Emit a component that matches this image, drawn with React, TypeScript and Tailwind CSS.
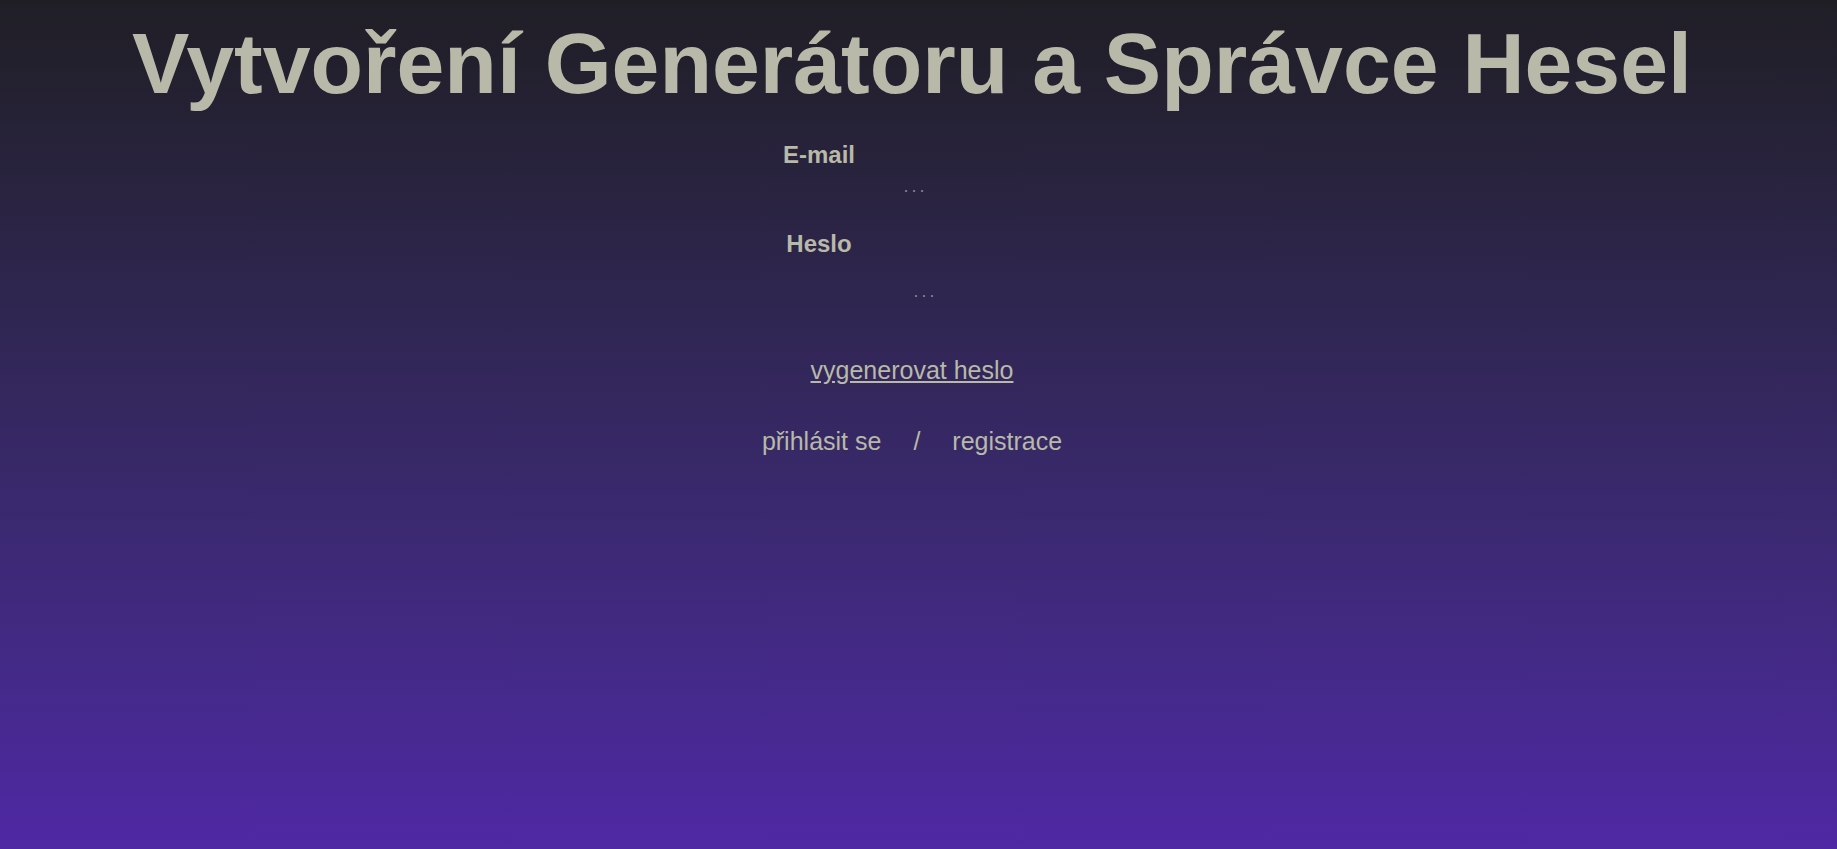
import React from 'react';

export default function App() {
  return (
    <div
      className="min-h-[849px] w-full bg-gradient-to-b from-[#201e25] to-[#4f28a4] pr-[13px] text-[#b8b9a8]"
      style={{ fontFamily: '"Liberation Sans", Arial, sans-serif' }}
    >
      {/* Title */}
      <h1 className="pt-[14px] text-center text-[86px] font-bold leading-[1.15] whitespace-nowrap">
        Vytvoření Generátoru a Správce Hesel
      </h1>

      {/* Login form */}
      <form className="mx-auto mt-[28px] w-[400px]" onSubmit={(e) => e.preventDefault()}>
        <label htmlFor="email" className="block w-[214px] text-center text-[24px] font-bold leading-[1.15]">
          E-mail
        </label>
        <input
          id="email"
          type="email"
          placeholder="..."
          className="mt-[13px] block w-full bg-transparent pl-[190px] font-['Liberation_Mono',monospace] text-[13.33px] leading-[1.133] outline-none placeholder:text-[#92909c]"
        />

        <label htmlFor="heslo" className="mt-[33px] block w-[214px] text-center text-[24px] font-bold leading-[1.15]">
          Heslo
        </label>
        <input
          id="heslo"
          type="password"
          placeholder="..."
          className="mt-[29px] block w-full bg-transparent pl-[200px] font-['Liberation_Mono',monospace] text-[13.33px] leading-[1.133] outline-none placeholder:text-[#92909c]"
        />
      </form>

      <div className="mt-[55px] text-center text-[25px] leading-[1.15]">
        <a href="#" className="underline">vygenerovat heslo</a>
      </div>

      <div className="mt-[42px] flex justify-center gap-[32px] text-[25px] leading-[1.15]">
        <a href="#">přihlásit se</a>
        <span>/</span>
        <a href="#">registrace</a>
      </div>
    </div>
  );
}
